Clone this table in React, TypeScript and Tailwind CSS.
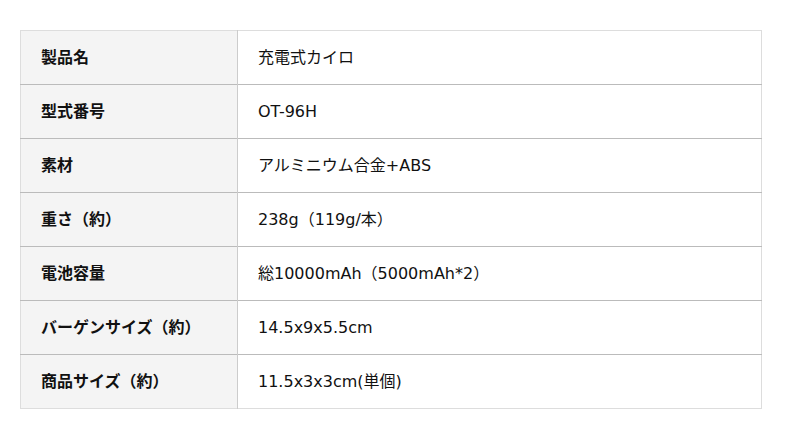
const rows: [string, string][] = [
  ['製品名', '充電式カイロ'],
  ['型式番号', 'OT-96H'],
  ['素材', 'アルミニウム合金+ABS'],
  ['重さ（約）', '238g（119g/本）'],
  ['電池容量', '総10000mAh（5000mAh*2）'],
  ['バーゲンサイズ（約）', '14.5x9x5.5cm'],
  ['商品サイズ（約）', '11.5x3x3cm(単個)'],
];

export default function App() {
  return (
    <div
      className="w-[800px] h-[439px] bg-white pt-[30px] pl-[20px]"
      style={{ fontFamily: '"DejaVu Sans", "Noto Sans CJK JP", sans-serif' }}
    >
      <table className="w-[742px] border-collapse border border-[#dddddd] text-[16px] text-[#111111]">
        <tbody>
          {rows.map(([label, value], i) => (
            <tr
              key={i}
              className={i < rows.length - 1 ? 'h-[54px] border-b border-[#bbbbbb]' : 'h-[54px]'}
            >
              <th className="w-[217px] bg-[#f4f4f4] border-r border-[#cccccc] pl-[20px] text-left font-bold">
                {label}
              </th>
              <td className="pl-[20px]">{value}</td>
            </tr>
          ))}
        </tbody>
      </table>
    </div>
  );
}
